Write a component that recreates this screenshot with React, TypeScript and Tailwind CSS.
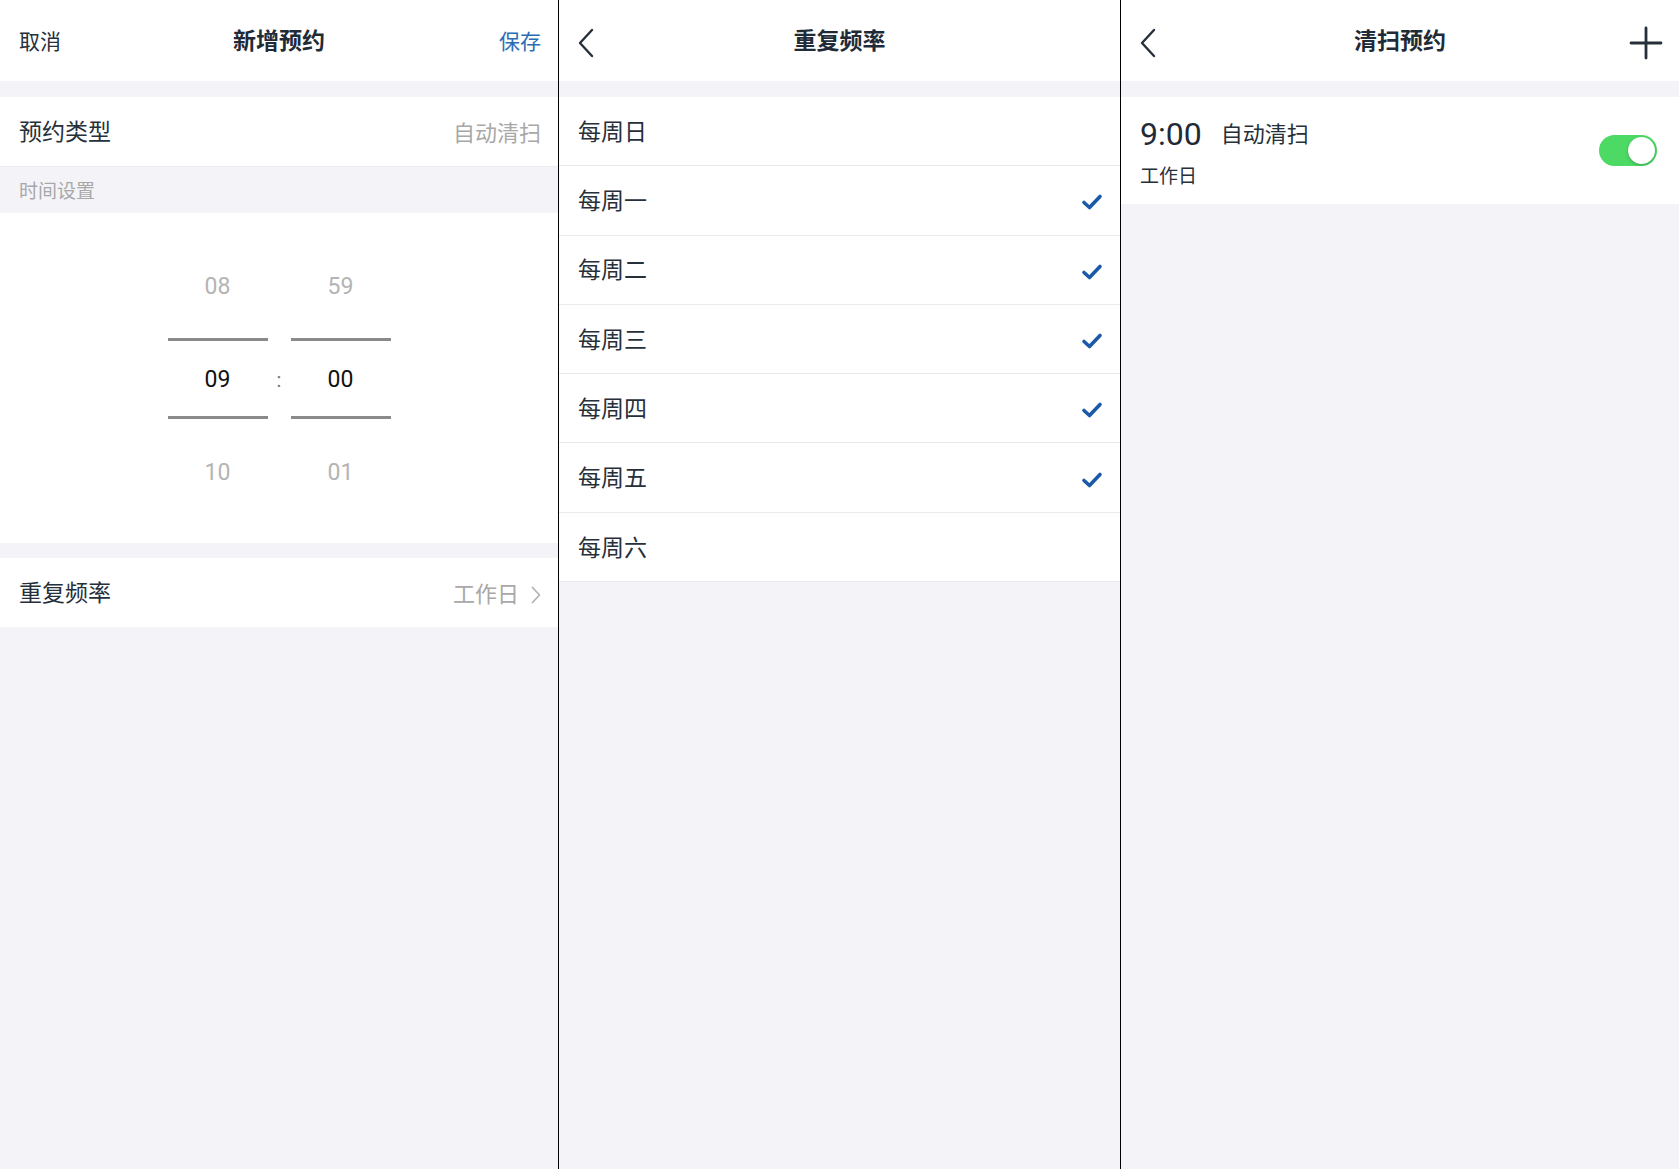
import { type ReactNode } from 'react';

const FONT = { fontFamily: 'Roboto, "Noto Sans CJK SC", "Noto Sans", sans-serif' };

function BackIcon() {
  return (
    <svg width="16" height="30" viewBox="0 0 16 30" fill="none" stroke="#26303b" strokeWidth="2.4" strokeLinecap="round" strokeLinejoin="round">
      <polyline points="14,2 2,15 14,28" />
    </svg>
  );
}

function Header({ left, title, right }: { left?: ReactNode; title: string; right?: ReactNode }) {
  return (
    <div className="relative flex h-[81px] items-center justify-between bg-white pl-[19px] pr-[17px] pt-[4px]">
      <div className="z-10 flex items-center">{left}</div>
      <div className="absolute inset-0 flex items-center justify-center pt-[4px] text-[23px] font-bold text-[#1f2b37]">
        {title}
      </div>
      <div className="z-10 flex items-center">{right}</div>
    </div>
  );
}

function Check() {
  return (
    <svg width="22" height="18" viewBox="0 0 22 18" fill="none" stroke="#1a5aa8" strokeWidth="3.6" strokeLinecap="round" strokeLinejoin="round">
      <polyline points="3,9.5 8.5,14.5 19,3.5" />
    </svg>
  );
}

function PickerColumn({ top, mid, bottom }: { top: string; mid: string; bottom: string }) {
  return (
    <div className="flex w-[100px] flex-col items-stretch">
      <div className="flex h-[93px] items-center justify-center pt-[4px] text-[23px] text-[#b4b4b4]">{top}</div>
      <div className="flex h-[93px] items-center">
        <div className="flex h-[81px] w-full items-center justify-center border-y-[3px] border-[#8a8a8a] pt-[4px] text-[23px] text-[#111]">
          {mid}
        </div>
      </div>
      <div className="flex h-[93px] items-center justify-center pt-[4px] text-[23px] text-[#b4b4b4]">{bottom}</div>
    </div>
  );
}

function NewSchedule() {
  return (
    <div className="flex flex-col bg-[#f4f4f8]">
      <Header
        left={<span className="text-[21px] text-[#26303b]">取消</span>}
        title="新增预约"
        right={<span className="text-[21px] text-[#2a6db5]">保存</span>}
      />
      <div className="mt-[16px] flex h-[69px] items-center justify-between bg-white pl-[19px] pr-[17px] pt-[4px]">
        <span className="text-[23px] text-[#26303b]">预约类型</span>
        <span className="text-[22px] text-[#a8a8a8]">自动清扫</span>
      </div>
      <div className="flex h-[47px] items-center border-t border-[#ececf0] px-[19px] pt-[4px] text-[19px] text-[#a8a8a8]">
        时间设置
      </div>
      <div className="flex h-[330px] items-center justify-center bg-white">
        <PickerColumn top="08" mid="09" bottom="10" />
        <div className="flex w-[23px] justify-center pt-[4px] text-[20px] text-[#777]">:</div>
        <PickerColumn top="59" mid="00" bottom="01" />
      </div>
      <div className="mt-[15px] flex h-[69px] items-center justify-between bg-white pl-[19px] pr-[17px] pt-[4px]">
        <span className="text-[23px] text-[#26303b]">重复频率</span>
        <span className="flex items-center gap-[12px] text-[22px] text-[#a8a8a8]">
          工作日
          <svg width="10" height="18" viewBox="0 0 10 18" fill="none" stroke="#b4b4b4" strokeWidth="1.8" strokeLinecap="round" strokeLinejoin="round">
            <polyline points="1.5,1.5 8.5,9 1.5,16.5" />
          </svg>
        </span>
      </div>
    </div>
  );
}

const days = [
  { label: '每周日', on: false },
  { label: '每周一', on: true },
  { label: '每周二', on: true },
  { label: '每周三', on: true },
  { label: '每周四', on: true },
  { label: '每周五', on: true },
  { label: '每周六', on: false },
];

function Repeat() {
  return (
    <div className="flex flex-col border-l border-black bg-[#f4f4f8]">
      <Header left={<BackIcon />} title="重复频率" />
      <div className="mt-[16px] flex flex-col bg-white">
        {days.map((d) => (
          <div
            key={d.label}
            className="flex h-[69.3px] items-center justify-between border-b border-[#ebebef] pl-[19px] pr-[17px] pt-[4px]"
          >
            <span className="text-[23px] text-[#26303b]">{d.label}</span>
            {d.on && <Check />}
          </div>
        ))}
      </div>
    </div>
  );
}

function ScheduleList() {
  return (
    <div className="flex flex-col border-l border-black bg-[#f4f4f8]">
      <Header
        left={<BackIcon />}
        title="清扫预约"
        right={
          <svg width="34" height="34" viewBox="0 0 34 34" fill="none" stroke="#26303b" strokeWidth="2.8" strokeLinecap="round" className="-mr-[1px]">
            <path d="M17 2v30M2 17h30" />
          </svg>
        }
      />
      <div className="mt-[16px] flex h-[107px] items-center justify-between bg-white pl-[19px] pr-[22px]">
        <div className="flex flex-col pt-[6px]">
          <div className="flex h-[38px] items-center gap-[19px]">
            <span className="text-[32px] leading-none text-[#1f2b37]">9:00</span>
            <span className="text-[22px] text-[#26303b]">自动清扫</span>
          </div>
          <div className="mt-[10px] text-[19px] text-[#26303b]">工作日</div>
        </div>
        <div className="flex h-[31px] w-[58px] items-center justify-end rounded-full bg-[#4cd964] px-[2px]">
          <div className="h-[27px] w-[27px] rounded-full bg-white shadow-[0_1px_3px_rgba(0,0,0,0.25)]" />
        </div>
      </div>
    </div>
  );
}

export default function App() {
  return (
    <div style={FONT} className="grid h-[1169px] w-[1679px] grid-cols-[558px_562px_1fr] overflow-hidden bg-[#f4f4f8]">
      <NewSchedule />
      <Repeat />
      <ScheduleList />
    </div>
  );
}
